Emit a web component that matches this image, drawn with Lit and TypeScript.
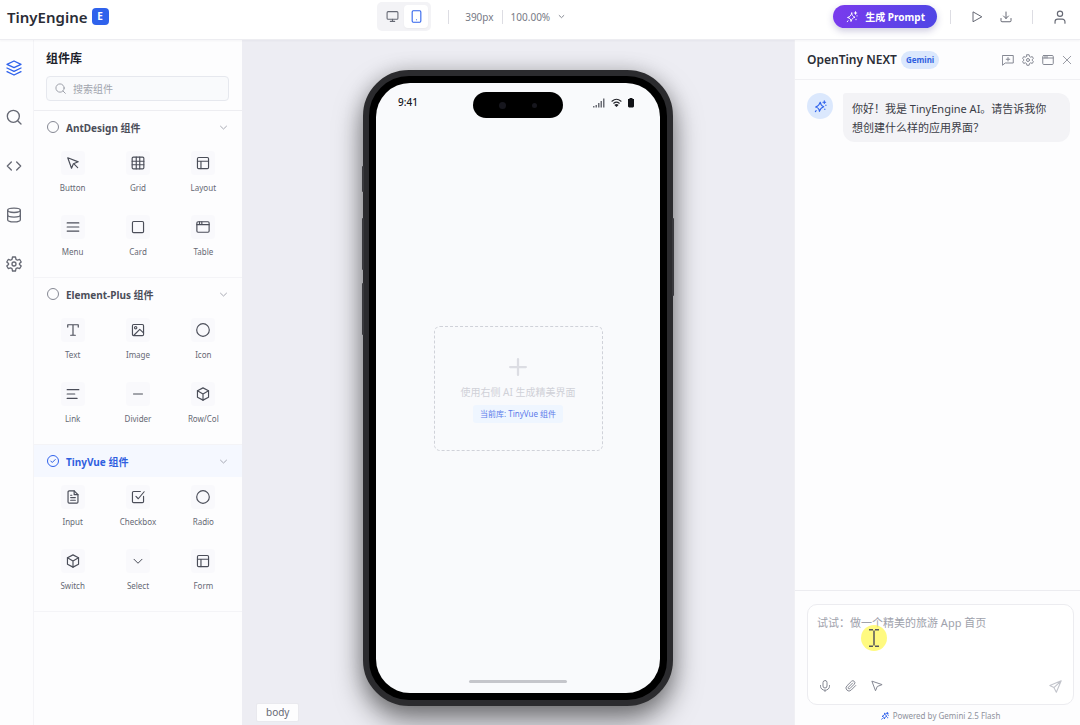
import { LitElement, css, html, svg, nothing, type TemplateResult } from "lit";
import { customElement, property, state } from "lit/decorators.js";
import { classMap } from "lit/directives/class-map.js";

const ICONS: Record<string, TemplateResult> = {
  layers: svg`<path d="m12 1.500 10.500 5L12 11.500 1.500 6.500z"/><path d="m1.500 12 10.500 5 10.500-5"/><path d="m1.500 17.500 10.500 5 10.500-5"/>`,
  search: svg`<circle cx="11" cy="11" r="9"/><path d="m22.500 22.500-5-5"/>`,
  code: svg`<path d="m16 18 6-6-6-6M8 6l-6 6 6 6"/>`,
  database: svg`<ellipse cx="12" cy="5" rx="9.5" ry="3.2"/><path d="M2.500 5v14c0 1.800 4.200 3.200 9.500 3.200s9.500-1.400 9.500-3.200V5"/><path d="M2.500 12c0 1.800 4.200 3.200 9.500 3.200s9.500-1.400 9.500-3.200"/>`,
  gear: svg`<path d="M9.800 1.500h4.400l.8 3.500 2.200 1.300 3.400-1.100 2.200 3.800-2.600 2.400v1.200l2.600 2.400-2.200 3.800-3.400-1.100L15 19l-.8 3.500H9.800L9 19l-2.200-1.300-3.400 1.100L1.200 15l2.600-2.400v-1.200L1.200 9l2.200-3.800 3.400 1.100L9 5z"/><circle cx="12" cy="12" r="3"/>`,
  monitor: svg`<rect x="2" y="3" width="20" height="14" rx="2"/><path d="M8 21h8M12 17v4"/>`,
  tablet: svg`<rect x="4" y="1.500" width="16" height="21" rx="2"/><path d="M12 18h.01"/>`,
  down: svg`<path d="m4 8.500 8 7.500 8-7.500"/>`,
  sparkle: svg`<path d="M11.500 4c.6 5 2 6.700 6.500 8.500-4.700 1.300-6.300 3-8 8.500-.4-5-2-6.800-7-8 5-1.500 7-3.500 8.500-9z"/><path d="M19 1.500v5M16.500 4h5M22 9.500v.5M4 19.500l-1.500 2M20 16.500v1"/>`,
  play: svg`<path d="M4 2.500v19L21 12z"/>`,
  download: svg`<path d="M2 15v4.500a2 2 0 0 0 2 2h16a2 2 0 0 0 2-2V15M7 10l5 5 5-5M12 15V2"/>`,
  user: svg`<circle cx="12" cy="6.500" r="4.500"/><path d="M3.500 22.500V20A4.500 4.500 0 0 1 8 15.500h8a4.500 4.500 0 0 1 4.500 4.500v2.500"/>`,
  newChat: svg`<path d="M1.500 3h21v15H6.500l-5 4zM12 7v7M8.500 10.500h7"/>`,
  window: svg`<rect x="1.500" y="3" width="21" height="18" rx="2"/><path d="M1.500 8h21M6 3v5M10 3v5"/>`,
  close: svg`<path d="m3 3 18 18M21 3 3 21"/>`,
  cursor: svg`<path d="m3 3 6.500 18 3.200-7.600L21 10z"/><path d="m14 14 6 6"/>`,
  pointer: svg`<path d="m2 3 7 18.500 3.500-8.500L21.500 9.500z"/>`,
  grid: svg`<rect x="2" y="2" width="20" height="20" rx="2"/><path d="M2 9h20M2 15h20M9 2v20M15 2v20"/>`,
  layout: svg`<rect x="2.500" y="2.500" width="19" height="19" rx="2"/><path d="M2.500 9h19M8.500 9v12.500"/>`,
  menu: svg`<path d="M2 5h20M2 12h20M2 19h20"/>`,
  square: svg`<rect x="2.500" y="2.500" width="19" height="19" rx="2"/>`,
  text: svg`<path d="M3 7V3h18v4M12 3v18M8 21h8"/>`,
  image: svg`<rect x="2.500" y="2.500" width="19" height="19" rx="2"/><circle cx="8" cy="8" r="2"/><path d="m5 21 10-10 6.500 6"/>`,
  circle: svg`<circle cx="12" cy="12" r="10.800"/>`,
  align: svg`<path d="M2 4.500h20M2 12h13M2 19.500h17"/>`,
  minus: svg`<path d="M3 12h18"/>`,
  cube: svg`<path d="m12 1.500 9.500 5v11l-9.500 5-9.500-5v-11z"/><path d="M2.500 6.500 12 12l9.500-5.500M12 12v10.500"/>`,
  file: svg`<path d="M14 1.500H5.500a2 2 0 0 0-2 2v17a2 2 0 0 0 2 2h13a2 2 0 0 0 2-2V8z"/><path d="M14 1.500V8h6.500M8 9h2M8 13h8M8 17.500h8"/>`,
  check: svg`<path d="M21.500 11v8.500a2 2 0 0 1-2 2h-15a2 2 0 0 1-2-2v-15a2 2 0 0 1 2-2H16M8.500 11l4 4L22.500 3"/>`,
  chevron: svg`<path d="m4 8.500 8 8 8-8"/>`,
  tick: svg`<path d="m7.500 12 3 3 6-6"/>`,
  mic: svg`<rect x="8" y="1" width="8" height="15" rx="4"/><path d="M3 11v1.500a9 8 0 0 0 18 0V11M12 20.500V23"/>`,
  clip: svg`<path d="m21.500 11-9.200 9.200a6 6 0 0 1-8.500-8.500L13 2.600a4 4 0 0 1 5.700 5.600l-9.200 9.200a2 2 0 0 1-2.800-2.800l8.500-8.500"/>`,
  send: svg`<path d="M22.500 1.500 1.500 10l7.500 4 4.500 8.500zM9 14 22.500 1.500"/>`,
  plus: svg`<path d="M12 1.500v21M1.500 12h21"/>`,
};

const icon = (name: string, size: number, stroke = 2) => html`<svg
  class="icon" width=${size} height=${size} viewBox="0 0 24 24" fill="none" stroke="currentColor"
  stroke-width=${stroke} stroke-linecap="round" stroke-linejoin="round" aria-hidden="true">${ICONS[name]}</svg>`;

const base = css`
  *, *::before, *::after { box-sizing: border-box; }
  button, select, input, textarea { font: inherit; color: inherit; border: 0; background: none; margin: 0; padding: 0; }
  button { cursor: pointer; display: flex; align-items: center; justify-content: center; }
  .icon { display: block; flex: none; }
`;

interface Library { id: string; name: string; items: [string, string][]; }

const LIBRARIES: Library[] = [
  { id: "antd", name: "AntDesign 组件", items: [["Button", "cursor"], ["Grid", "grid"], ["Layout", "layout"], ["Menu", "menu"], ["Card", "square"], ["Table", "window"]] },
  { id: "element", name: "Element-Plus 组件", items: [["Text", "text"], ["Image", "image"], ["Icon", "circle"], ["Link", "align"], ["Divider", "minus"], ["Row/Col", "cube"]] },
  { id: "tinyvue", name: "TinyVue 组件", items: [["Input", "file"], ["Checkbox", "check"], ["Radio", "circle"], ["Switch", "cube"], ["Select", "chevron"], ["Form", "layout"]] },
];

@customElement("te-toolbar")
class Toolbar extends LitElement {
  static styles = [base, css`
    :host { display: flex; align-items: center; justify-content: space-between; height: 40px; padding: 0 7px 6px; background: #fff; border-bottom: 1px solid #ededf1; box-shadow: 0 1px 2px rgba(20, 20, 50, .04); position: relative; z-index: 2; }
    .group { display: flex; align-items: center; }
    .brand { font-size: 15px; line-height: 20px; font-weight: 600; margin: 0; color: #2a2c36; }
    .badge { width: 17px; height: 17px; margin-left: 4px; border-radius: 4px; background: #2f62ec; color: #fff; font-size: 10px; line-height: 17px; font-weight: 700; text-align: center; }
    .devices { display: flex; margin-right: 17px; padding: 3px; border-radius: 5px; background: #f3f3f6; height: 29px; }
    .device { width: 24px; height: 23px; border-radius: 4px; color: #666974; }
    .device.on { background: #fff; color: #2f62ec; box-shadow: 0 1px 2px rgba(0, 0, 0, .04); }
    .rule { width: 1px; height: 14px; background: #dddde3; }
    .metrics { display: flex; align-items: center; gap: 8px; margin-left: 16px; font-size: 10px; line-height: 14px; color: #777a85; }
    .zoom { display: grid; align-items: center; justify-items: end; }
    .zoom select { grid-area: 1 / 1; appearance: none; width: 54px; outline: 0; }
    .zoom .icon { grid-area: 1 / 1; pointer-events: none; }
    .prompt { gap: 7px; height: 23px; padding: 0 12px 0 13px; border-radius: 12px; color: #fff; font-size: 10px; font-weight: 700; white-space: nowrap; background: linear-gradient(100deg, #7a3aed, #4f46e5); box-shadow: 0 3px 7px rgba(60, 50, 130, .25); }
    .tool { width: 14px; height: 20px; color: #666974; }
    .actions { gap: 13px; }
    .pair { display: flex; gap: 15px; padding: 0 6px; }
    .account { margin: 0 6px 0 7px; }
  `];
  @state() private device = "mobile";
  render() {
    const device = (id: string, label: string, glyph: string) => html`<button
      class=${classMap({ device: true, on: this.device === id })} aria-label=${label}
      aria-pressed=${this.device === id} @click=${() => (this.device = id)}>${icon(glyph, 13)}</button>`;
    return html`
      <div class="group"><h1 class="brand">TinyEngine</h1><span class="badge">E</span></div>
      <div class="group">
        <div class="devices">${device("desktop", "桌面", "monitor")}${device("mobile", "手机", "tablet")}</div>
        <span class="rule"></span>
        <div class="metrics">
          <span>390px</span><span class="rule"></span>
          <span class="zoom"><select aria-label="缩放"><option>100.00%</option><option>75.00%</option></select>${icon("down", 7, 3)}</span>
        </div>
      </div>
      <div class="group actions">
        <button class="prompt">${icon("sparkle", 12, 2)}<span>生成 Prompt</span></button>
        <span class="rule"></span>
        <div class="pair"><button class="tool" aria-label="预览">${icon("play", 12, 2)}</button><button class="tool" aria-label="下载">${icon("download", 12, 2)}</button></div>
        <span class="rule"></span>
        <button class="tool account" aria-label="账户">${icon("user", 14, 2)}</button>
      </div>`;
  }
}

@customElement("te-library")
class LibraryPanel extends LitElement {
  static styles = [base, css`
    :host { display: block; background: #fdfdfe; border-left: 1px solid #f4f4f7; }
    .top { padding: 10px 13px 9px 12px; border-bottom: 1px solid #ededf1; }
    .title { margin: 0 0 8px; font-size: 12px; line-height: 18px; font-weight: 700; color: #20222c; }
    .search { display: flex; align-items: center; gap: 7px; height: 25px; padding: 0 8px; border: 1px solid #e6e8ee; border-radius: 4px; background: #f9fafc; color: #9699a3; }
    .search input { flex: 1; min-width: 0; font-size: 10px; outline: 0; }
    .search input::placeholder { color: #a2a5ae; opacity: 1; }
    .section { border-bottom: 1px solid #f4f4f7; }
    .head { display: flex; align-items: center; height: 32px; padding: 0 14px 0 13px; color: #4b4e59; }
    .head.on { background: #f5f8ff; color: #2f5fe0; }
    .pick { flex: 1; display: flex; align-items: center; gap: 7px; font-size: 10px; font-weight: 700; cursor: pointer; }
    .mark { display: grid; place-items: center; }
    .mark input, .mark .icon { grid-area: 1 / 1; }
    .mark input { appearance: none; width: 12px; height: 12px; border: 1px solid #858893; border-radius: 50%; }
    .mark input:checked { border-color: #2f62ec; }
    .mark .icon { pointer-events: none; }
    .fold { color: #8b8e99; }
    .items { display: grid; grid-template-columns: repeat(3, 1fr); row-gap: 21px; padding: 8px 6px 19px; }
    .item { flex-direction: column; gap: 7px; font-size: 8px; line-height: 12px; color: #666974; }
    .tile { display: grid; place-items: center; width: 24px; height: 24px; border-radius: 4px; background: #f9f9fc; color: #4b4e59; }
  `];
  @state() private active = "tinyvue";
  render() {
    return html`
      <div class="top">
        <h2 class="title">组件库</h2>
        <label class="search">${icon("search", 11, 2)}<input type="search" placeholder="搜索组件" aria-label="搜索组件" /></label>
      </div>
      ${LIBRARIES.map((lib) => {
        const on = lib.id === this.active;
        return html`<section class="section">
          <div class=${classMap({ head: true, on })}>
            <label class="pick"><span class="mark"><input type="radio" name="library" .checked=${on}
              @change=${() => (this.active = lib.id)} />${on ? icon("tick", 12, 2) : nothing}</span>${lib.name}</label>
            <button class="fold" aria-label="折叠 ${lib.name}">${icon("down", 9, 2)}</button>
          </div>
          <div class="items">${lib.items.map(([name, glyph]) => html`<button class="item">
            <span class="tile">${icon(glyph, glyph === "minus" || glyph === "chevron" ? 12 : 14, 2)}</span><span>${name}</span></button>`)}</div>
        </section>`;
      })}`;
  }
}

@customElement("te-stage")
class Stage extends LitElement {
  static styles = [base, css`
    :host { display: flex; justify-content: center; align-items: flex-start; padding: 30px 0 19px; background: #ededf3; position: relative; overflow: hidden; }
    .phone { position: relative; width: 310px; aspect-ratio: 310 / 636; border: 6px solid #2b2b2e; border-radius: 46px; background: #000; padding: 7px; display: flex; box-shadow: 0 14px 28px rgba(0, 0, 0, .5), 0 0 20px rgba(0, 0, 0, .15); }
    .key { position: absolute; left: -7px; width: 2px; border-radius: 2px; background: #39393d; height: 52px; }
    .mute { top: 90px; height: 26px; }
    .up { top: 142px; }
    .dim { top: 207px; }
    .power { left: auto; right: -7px; top: 142px; height: 78px; }
    .screen { flex: 1; display: grid; grid-template-rows: 38px 1fr 38px; border-radius: 34px; background: #f9fafc; }
    .status { display: grid; grid-template-columns: 1fr auto 1fr; align-items: end; font-size: 10px; line-height: 26px; font-weight: 500; color: #16171c; height: 35px; }
    .time { padding: 0 0 3px 22px; }
    .island { display: flex; align-items: center; justify-content: space-evenly; width: 90px; height: 26px; border-radius: 13px; background: #000; }
    .lens { width: 7px; height: 7px; border-radius: 50%; background: #16161d; }
    .lens.small { width: 5px; height: 5px; }
    .signals { display: flex; justify-content: flex-end; align-items: center; gap: 6px; height: 26px; padding: 0 26px 5px 0; }
    .center { display: grid; place-items: center; }
    .drop { display: flex; flex-direction: column; align-items: center; width: 169px; padding: 31px 0 27px; border: 1px dashed #d0d2d9; border-radius: 6px; color: #dcdde3; }
    .hint { margin: 9px 0 6px; font-size: 10px; line-height: 14px; white-space: nowrap; color: #d0d1d8; }
    .lib { padding: 0 7px; border-radius: 3px; background: #eff6ff; color: #5b7bea; font-size: 8px; line-height: 18px; white-space: nowrap; }
    .home { align-self: end; justify-self: center; width: 98px; height: 3px; margin-bottom: 10px; border-radius: 2px; background: #c5c6cb; }
    .crumb { position: absolute; left: 14px; bottom: 3px; padding: 0 9px; border: 1px solid #e9e9ee; border-radius: 2px; background: #fdfdfe; color: #666974; font-size: 10px; line-height: 17px; }
  `];
  render() {
    return html`
      <div class="phone">
        <i class="key mute"></i><i class="key up"></i><i class="key dim"></i><i class="key power"></i>
        <div class="screen">
          <div class="status">
            <span class="time">9:41</span>
            <span class="island"><i class="lens"></i><i class="lens small"></i></span>
            <span class="signals">
              <svg width="12" height="10" viewBox="0 0 12 10" fill="#6b6d75" aria-hidden="true"><path d="M0 8h1.500v1.500H0zM2.500 7H4v2.500H2.500zM5 5h1.500v4.500H5zM7.500 3H9v6.500H7.500zM10 .5h1.500v9H10z"/></svg>
              <svg width="11" height="9" viewBox="0 0 22 18" fill="none" stroke="#222329" stroke-width="2.200" stroke-linecap="round" aria-hidden="true"><path d="M2 6.500c5.500-5 12.500-5 18 0M5.500 10.500c3.500-3 7.500-3 11 0"/><path d="m8.500 14 2.500 2.500 2.500-2.500c-1.500-1-3.500-1-5 0z" fill="#222329"/></svg>
              <svg width="6" height="10" viewBox="0 0 6 10" fill="#111216" aria-hidden="true"><path d="M1.500 0h3v1H6v7.500L5 9.500H1l-1-1V1h1.500z"/></svg>
            </span>
          </div>
          <div class="center"><div class="drop">${icon("plus", 18, 3)}
            <p class="hint">使用右侧 AI 生成精美界面</p><span class="lib">当前库: TinyVue 组件</span></div></div>
          <div class="home"></div>
        </div>
      </div>
      <span class="crumb">body</span>`;
  }
}

@customElement("te-chat")
class Chat extends LitElement {
  static styles = [base, css`
    :host { display: flex; flex-direction: column; background: #fdfdfe; border-left: 1px solid #f0f0f4; }
    .head { display: flex; align-items: center; height: 40px; padding: 0 8px 0 12px; border-bottom: 1px solid #f0f0f3; }
    .title { margin: 0; font-size: 12px; line-height: 18px; font-weight: 600; color: #2b2d36; white-space: nowrap; }
    .model { margin-left: 4px; padding: 0 5px; border-radius: 9px; background: #dbe8fd; color: #2f5fe0; font-size: 8px; line-height: 18px; font-weight: 700; }
    .tools { display: flex; gap: 8px; margin-left: auto; color: #858893; }
    .log { flex: 1; display: flex; align-items: flex-start; gap: 10px; padding: 13px 10px 13px 12px; }
    .avatar { flex: none; display: grid; place-items: center; width: 26px; height: 26px; border-radius: 50%; background: #dbe8fd; color: #2f62ec; }
    .bubble { margin: 0; padding: 6px 20px 5px 9px; border-radius: 3px 12px 12px 12px; background: #f3f3f6; color: #3b3d46; font-size: 11px; line-height: 19px; }
    .foot { border-top: 1px solid #ececf0; padding: 13px 6px 3px 12px; }
    .composer { position: relative; padding: 9px; border: 1px solid #ececf0; border-radius: 10px; background: #fff; }
    .composer textarea { display: block; width: 100%; height: 63px; resize: none; outline: 0; font-size: 11px; line-height: 18px; color: #33353e; }
    .composer textarea::placeholder { color: #a0a2ac; opacity: 1; }
    .bar { display: flex; align-items: center; gap: 14px; height: 18px; padding: 0 2px; color: #858893; }
    .bar .send { margin-left: auto; color: #c2c4cb; }
    .beam { position: absolute; left: 53px; top: 20px; width: 26px; height: 26px; border-radius: 50%; background: rgba(255, 247, 60, .65); display: grid; place-items: center; color: #55565b; pointer-events: none; }
    .powered { display: flex; align-items: center; justify-content: center; gap: 4px; margin: 5px 0 0; font-size: 8px; line-height: 12px; color: #8f929c; }
    .powered .icon { color: #2f62ec; }
  `];
  render() {
    const tool = (label: string, glyph: string, size = 12) => html`<button aria-label=${label}>${icon(glyph, size, 2)}</button>`;
    return html`
      <header class="head">
        <h2 class="title">OpenTiny NEXT</h2><span class="model">Gemini</span>
        <div class="tools">${tool("新对话", "newChat")}${tool("设置", "gear")}${tool("窗口", "window")}${tool("关闭", "close", 10)}</div>
      </header>
      <div class="log">
        <span class="avatar">${icon("sparkle", 13, 2)}</span>
        <p class="bubble">你好！我是 TinyEngine AI。请告诉我你想创建什么样的应用界面？</p>
      </div>
      <footer class="foot">
        <div class="composer">
          <textarea aria-label="描述应用" placeholder="试试：做一个精美的旅游 App 首页"></textarea>
          <div class="bar">${tool("语音", "mic")}${tool("附件", "clip")}${tool("选择元素", "pointer")}
            <button class="send" aria-label="发送">${icon("send", 13, 2)}</button></div>
          <span class="beam"><svg width="10" height="18" viewBox="0 0 10 18" fill="none" stroke="currentColor" stroke-width="1.500" aria-hidden="true"><path d="M0 .8h4M6 .8h4M5 1.500v15M0 17.200h4M6 17.200h4"/></svg></span>
        </div>
        <p class="powered">${icon("sparkle", 8, 3)}<span>Powered by Gemini 2.5 Flash</span></p>
      </footer>`;
  }
}

@customElement("app-root")
class AppRoot extends LitElement {
  static styles = [base, css`
    :host { display: grid; grid-template-rows: auto 1fr; min-height: 100vh; font-family: "Noto Sans", "Noto Sans CJK SC", sans-serif; color: #33353e; background: #fff; }
    .main { display: grid; grid-template-columns: 33px 209px 1fr 286px; }
    .rail { display: flex; flex-direction: column; gap: 33px; padding: 20px 0 0 5px; align-items: flex-start; background: #fdfdfe; color: #666974; }
    .nav { width: 17px; height: 16px; }
    .nav.on { color: #2f62ec; }
  `];
  @property() view = "layers";
  render() {
    const nav: [string, string][] = [["layers", "组件"], ["search", "搜索"], ["code", "代码"], ["database", "数据"], ["gear", "设置"]];
    return html`
      <te-toolbar></te-toolbar>
      <div class="main">
        <nav class="rail">${nav.map(([id, label]) => html`<button class=${classMap({ nav: true, on: this.view === id })}
          aria-label=${label} @click=${() => (this.view = id)}>${icon(id, 16, 2)}</button>`)}</nav>
        <te-library></te-library>
        <te-stage></te-stage>
        <te-chat></te-chat>
      </div>`;
  }
}
